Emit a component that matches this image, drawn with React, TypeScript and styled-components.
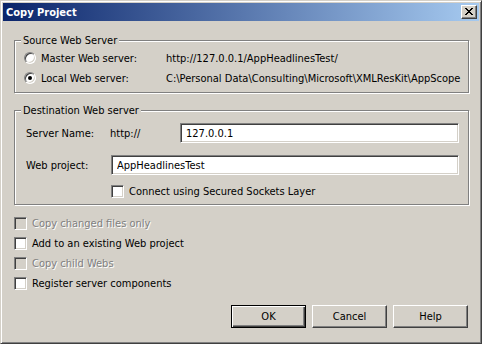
import React from 'react';
import styled, { createGlobalStyle } from 'styled-components';

const Global = createGlobalStyle`
  html, body { margin: 0; padding: 0; background: #d4d0c8; }
  body {
    width: 482px; height: 344px; overflow: hidden;
    font-family: "DejaVu Sans Condensed", "DejaVu Sans", "Liberation Sans", sans-serif;
    font-stretch: condensed;
    font-size: 11px;
    color: #000;
  }
  * { box-sizing: border-box; }
`;

const Window = styled.div`
  width: 482px;
  height: 344px;
  border: 1px solid;
  border-color: #d4d0c8 #404040 #404040 #d4d0c8;
  box-shadow: inset 1px 1px 0 #fff, inset -1px -1px 0 #808080;
  padding: 2px;
  display: flex;
  flex-direction: column;
  background: #d4d0c8;
`;

const TitleBar = styled.div`
  height: 18px;
  display: flex;
  align-items: center;
  justify-content: space-between;
  padding: 0 2px 0 3px;
  background: linear-gradient(to right, #0a246a, #a6caf0);
`;

const Title = styled.span`
  color: #fff;
  font-weight: bold;
  font-size: 11px;
`;

const CloseButton = styled.div`
  width: 16px;
  height: 14px;
  display: flex;
  align-items: center;
  justify-content: center;
  background: #d4d0c8;
  border: 1px solid;
  border-color: #fff #404040 #404040 #fff;
  box-shadow: inset -1px -1px 0 #808080;
  padding-bottom: 1px;
`;

const Body = styled.div`
  flex: 1;
  display: flex;
  flex-direction: column;
  padding: 19px 10px 0 11px;
`;

const Group = styled.div<{ $h: number; $mt?: number }>`
  position: relative;
  height: ${(p) => p.$h}px;
  margin-top: ${(p) => p.$mt ?? 0}px;
  border: 1px solid #808080;
  box-shadow: inset 1px 1px 0 #fff, 1px 1px 0 #fff;
`;

const Legend = styled.span`
  position: absolute;
  top: -7px;
  left: 6px;
  padding: 0 2px;
  line-height: 13px;
  background: #d4d0c8;
`;

const RadioGrid = styled.div`
  display: grid;
  grid-template-columns: 142px 1fr;
  grid-auto-rows: 20px;
  padding: 7px 0 0 9px;
  align-items: center;
  white-space: nowrap;
`;

const Option = styled.label`
  display: flex;
  align-items: center;
  gap: 5px;
`;

const Radio = styled.span<{ $checked?: boolean }>`
  position: relative;
  width: 12px;
  height: 12px;
  border-radius: 50%;
  background: #fff;
  border: 1px solid;
  border-color: #808080 #fff #fff #808080;
  box-shadow: inset 1px 1px 0 #404040, inset -1px -1px 0 #d4d0c8;
  &::after {
    content: '';
    display: ${(p) => (p.$checked ? 'block' : 'none')};
    position: absolute;
    left: 3px;
    top: 3px;
    width: 4px;
    height: 4px;
    border-radius: 50%;
    background: #000;
  }
`;

const DestGrid = styled.div`
  display: grid;
  grid-template-columns: 84px 70px 1fr;
  grid-template-rows: 20px 20px 13px;
  row-gap: 12px;
  padding: 12px 9px 0 11px;
  align-items: center;
  white-space: nowrap;
`;

const ConnectRow = styled.div`
  grid-column: 2 / 4;
  margin-top: -5px;
  margin-left: 1px;
`;

const WideInput = styled.input`
  height: 20px;
  width: 100%;
  border: 1px solid;
  border-color: #808080 #fff #fff #808080;
  box-shadow: inset 1px 1px 0 #404040, inset -1px -1px 0 #d4d0c8;
  background: #fff;
  padding: 0 0 0 5px;
  font: inherit;
  font-stretch: condensed;
  color: #000;
  outline: none;
`;

const SpanInput = styled(WideInput)`
  grid-column: 2 / 4;
  margin-left: 1px;
  width: calc(100% - 1px);
`;

const CheckList = styled.div`
  display: flex;
  flex-direction: column;
  margin-top: 8px;
`;

const CheckRow = styled.label<{ $disabled?: boolean }>`
  height: 20px;
  display: flex;
  align-items: center;
  gap: 5px;
  color: ${(p) => (p.$disabled ? '#808080' : '#000')};
  text-shadow: ${(p) => (p.$disabled ? '1px 1px 0 #fff' : 'none')};
`;

const Box = styled.span<{ $disabled?: boolean }>`
  width: 13px;
  height: 13px;
  flex: none;
  background: ${(p) => (p.$disabled ? '#d4d0c8' : '#fff')};
  border: 1px solid;
  border-color: #808080 #fff #fff #808080;
  box-shadow: inset 1px 1px 0 #404040, inset -1px -1px 0 #d4d0c8;
`;

const Buttons = styled.div`
  display: flex;
  justify-content: flex-end;
  gap: 6px;
  margin-top: 12px;
  padding-right: 1px;
`;

const Button = styled.button<{ $default?: boolean }>`
  width: 75px;
  height: 23px;
  padding: 0;
  font: inherit;
  font-stretch: condensed;
  color: #000;
  background: #d4d0c8;
  border: 1px solid;
  border-color: ${(p) => (p.$default ? '#000' : '#fff #404040 #404040 #fff')};
  box-shadow: ${(p) =>
    p.$default
      ? 'inset 1px 1px 0 #fff, inset -1px -1px 0 #404040, inset -2px -2px 0 #808080'
      : 'inset -1px -1px 0 #808080'};
`;

const XIcon = () => {
  const rows = ['XX....XX', '.XX..XX.', '..XXXX..', '...XX...', '..XXXX..', '.XX..XX.', 'XX....XX'];
  const rects: JSX.Element[] = [];
  rows.forEach((r, y) =>
    r.split('').forEach((c, x) => {
      if (c === 'X') rects.push(<rect key={`${x}-${y}`} x={x} y={y} width={1} height={1} fill="#000" />);
    })
  );
  return (
    <svg width="8" height="7" viewBox="0 0 8 7" shapeRendering="crispEdges">
      {rects}
    </svg>
  );
};

export default function App() {
  return (
    <>
      <Global />
      <Window>
        <TitleBar>
          <Title>Copy Project</Title>
          <CloseButton>
            <XIcon />
          </CloseButton>
        </TitleBar>
        <Body>
          <Group $h={53}>
            <Legend>Source Web Server</Legend>
            <RadioGrid>
              <Option>
                <Radio />
                Master Web server:
              </Option>
              <span>http://127.0.0.1/AppHeadlinesTest/</span>
              <Option>
                <Radio $checked />
                Local Web server:
              </Option>
              <span>C:\Personal Data\Consulting\Microsoft\XMLResKit\AppScope</span>
            </RadioGrid>
          </Group>
          <Group $h={95} $mt={17}>
            <Legend>Destination Web server</Legend>
            <DestGrid>
              <span>Server Name:</span>
              <span>http://</span>
              <WideInput defaultValue="127.0.0.1" />
              <span>Web project:</span>
              <SpanInput defaultValue="AppHeadlinesTest" />
              <span />
              <ConnectRow>
                <CheckRow>
                  <Box />
                  Connect using Secured Sockets Layer
                </CheckRow>
              </ConnectRow>
            </DestGrid>
          </Group>
          <CheckList>
            <CheckRow $disabled>
              <Box $disabled />
              Copy changed files only
            </CheckRow>
            <CheckRow>
              <Box />
              Add to an existing Web project
            </CheckRow>
            <CheckRow $disabled>
              <Box $disabled />
              Copy child Webs
            </CheckRow>
            <CheckRow>
              <Box />
              Register server components
            </CheckRow>
          </CheckList>
          <Buttons>
            <Button $default>OK</Button>
            <Button>Cancel</Button>
            <Button>Help</Button>
          </Buttons>
        </Body>
      </Window>
    </>
  );
}
